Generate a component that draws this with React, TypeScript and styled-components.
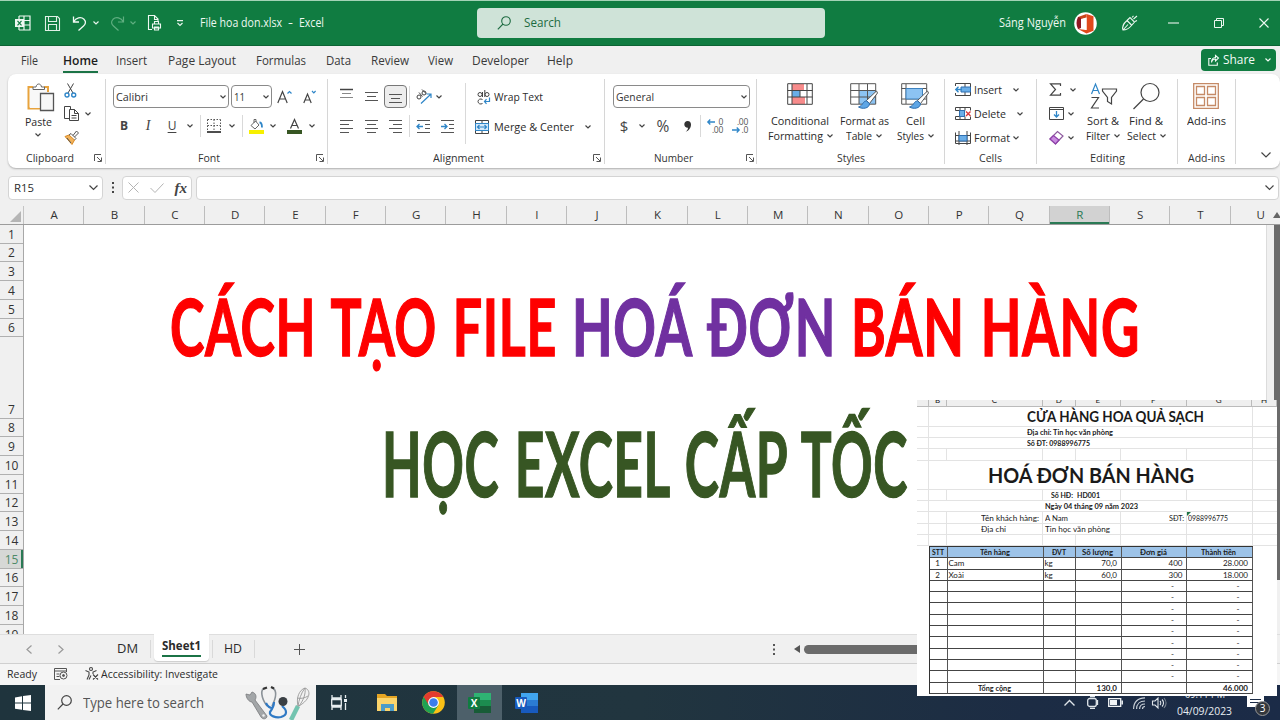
import React, { useLayoutEffect, useRef } from "react";
import styled, { createGlobalStyle } from "styled-components";

const GlobalStyle = createGlobalStyle`
  * { box-sizing: border-box; }
  body { margin: 0; background: #f0f0f0; overflow: hidden; }
  svg { display: block; flex: none; overflow: visible; }
`;

/* ---------- text fitted to a given width ---------- */

const FitBox = styled.span<{ $w: number }>`
  display: block;
  flex: none;
  width: ${(p) => p.$w}px;
  white-space: pre;
  text-align: left;
`;
const FitInner = styled.span`
  display: inline-block;
  transform-origin: 0 50%;
`;

function Fit({ w, children }: { w: number; children: React.ReactNode }) {
  const ref = useRef<HTMLSpanElement>(null);
  useLayoutEffect(() => {
    const el = ref.current;
    if (!el) return;
    el.style.transform = "none";
    const natural = el.getBoundingClientRect().width;
    if (natural > 0) el.style.transform = `scaleX(${w / natural})`;
  }, [w]);
  return (
    <FitBox $w={w}>
      <FitInner ref={ref}>{children}</FitInner>
    </FitBox>
  );
}

/* ---------- shared pieces ---------- */

const Screen = styled.div`
  width: 1280px;
  height: 720px;
  display: flex;
  flex-direction: column;
  position: relative;
  overflow: hidden;
  background: #f0f0f0;
  color: #2b2b2b;
  font: 12px/16px "Open Sans", "Noto Sans", sans-serif;
`;
const Slot = styled.div<{ $w?: number; $start?: boolean; $ml?: number }>`
  display: flex;
  flex: none;
  align-items: center;
  justify-content: ${(p) => (p.$start ? "flex-start" : "center")};
  width: ${(p) => (p.$w ? `${p.$w}px` : "auto")};
  margin-left: ${(p) => p.$ml ?? 0}px;
`;
const Spacer = styled.div`
  flex: 1;
`;

function Icon({ w, h, children, stroke = "#444", sw = 1 }: { w: number; h: number; children: React.ReactNode; stroke?: string; sw?: number }) {
  return (
    <svg width={w} height={h} viewBox={`0 0 ${w} ${h}`} fill="none" stroke={stroke} strokeWidth={sw}>
      {children}
    </svg>
  );
}
const Chevron = ({ c = "#444", s = 6, sw = 1.2 }: { c?: string; s?: number; sw?: number }) => (
  <Icon w={s} h={s / 2 + 1} stroke={c} sw={sw}>
    <path d={`M.5 .5L${s / 2} ${s / 2}L${s - 0.5} .5`} />
  </Icon>
);

/* ---------- title bar ---------- */

const TitleBar = styled.header`
  flex: none;
  height: 46px;
  display: flex;
  align-items: center;
  padding-left: 15px;
  background: #107c41;
  border-top: 1px solid #a3d3b6;
  border-bottom: 1px solid #0c6434;
  color: #eef8f2;
`;
const SearchBox = styled.div`
  width: 348px;
  height: 30px;
  margin-left: 153px;
  padding-left: 20px;
  display: flex;
  align-items: center;
  gap: 13px;
  border-radius: 4px;
  background: #cfe3d8;
  color: #1d6b41;
  font-size: 12.5px;
`;
const UserName = styled.div`
  margin-left: 174px;
  font-size: 12px;
`;

const Title = () => (
  <TitleBar>
    <Icon w={16} h={16} stroke="#eef8f2" sw={1.2}>
      <path d="M4 1h11v14H4M9 1v14M9 5.500h6M9 10h6M4 1v3M4 12v3" />
      <rect x="0" y="4" width="9" height="8" fill="#eef8f2" stroke="none" />
      <path d="M2.500 5.800l4 4.600M6.500 5.800l-4 4.600" stroke="#107c41" />
    </Icon>
    <Slot $ml={14} $w={15}>
      <Icon w={15} h={15} stroke="#dff0e6" sw={1.1}>
        <path d="M.5 .5h12l2 2v12H.5zM3.500 .5v5h8v-5M3.500 14.500v-6h8v6" />
      </Icon>
    </Slot>
    <Slot $ml={12} $w={15}>
      <Icon w={15} h={15} stroke="#f2faf5" sw={1.3}>
        <path d="M1.500 .5v5.500h5.500M1.500 6C4 1.500 9 .5 12 3.300c2.400 2.400 1.500 5-.5 6.700L6.500 14.500" />
      </Icon>
    </Slot>
    <Slot $w={17}><Chevron c="#e6f4ec" /></Slot>
    <Slot $ml={6} $w={15}>
      <Icon w={15} h={15} stroke="#5fae80" sw={1.2}>
        <path d="M13.500 .5v5.500H8M13.500 6C11 1.500 6 .5 3 3.300 .6 5.700 1.500 8.300 3.500 10L8.500 14.500" />
      </Icon>
    </Slot>
    <Slot $w={15}><Chevron c="#5fae80" /></Slot>
    <Slot $ml={8} $w={14}>
      <Icon w={14} h={16} stroke="#eef8f2" sw={1.1}>
        <path d="M4 14.500H.5V.5h6l3.500 3.500v2M6.500 .5v4h3.500M6.500 9V6.500h4V9M4.500 13V9h8v4zM6.500 12h4v3h-4z" />
      </Icon>
    </Slot>
    <Slot $w={14} $ml={11}>
      <Icon w={8} h={7} stroke="#e6f4ec" sw={1.2}><path d="M1 .6h6M1.500 3l2.500 2.500L6.500 3" /></Icon>
    </Slot>
    <Slot $ml={13}><Fit w={82}>File hoa don.xlsx</Fit></Slot>
    <Slot $ml={6}><Fit w={5}>-</Fit></Slot>
    <Slot $ml={6}><Fit w={25}>Excel</Fit></Slot>
    <SearchBox>
      <Icon w={14} h={14} stroke="#1d6b41" sw={1.1}><circle cx="9" cy="5" r="4.300" /><path d="M6 8L.8 13.300" /></Icon>
      <Fit w={37}>Search</Fit>
    </SearchBox>
    <UserName><Fit w={67}>Sáng Nguyễn</Fit></UserName>
    <Slot $ml={8}>
      <svg width="23" height="23" viewBox="0 0 23 23">
        <circle cx="11.500" cy="11.500" r="11.300" fill="#fff" />
        <path d="M12.500 2L4 5v12l3-1.200V7l5.500-1.500z" fill="#c8451b" />
        <path d="M12.500 2l7 2.300v14.400l-7 2.800L4 17l8.500 1z" fill="#e0491c" />
        <path d="M4 5l3 1v10l-3 1c-2-4-2-8 0-12z" fill="#8f1722" />
        <path d="M8.500 7l4-1.500V18l-4-1.500z" fill="#fff" />
      </svg>
    </Slot>
    <Slot $ml={24} $w={17}>
      <Icon w={16} h={16} stroke="#eef8f2" sw={1.1}>
        <path d="M1 15C0 12 1.500 8.500 5 5.500l3-3 4.500 4.500-3 3.500C7 13.500 4.500 15 1 15zM1 15l5-5.500M5 5.500L9.500 10M10 2.500L11.500 .8M11.500 4L15 1M13 6.500l2-1" />
      </Icon>
    </Slot>
    <Slot $ml={30} $w={11}><Icon w={11} h={2} stroke="#fff"><path d="M0 1h11" /></Icon></Slot>
    <Slot $ml={34} $w={11}>
      <Icon w={10} h={10} stroke="#eef8f2"><path d="M.5 2.500h7v7h-7zM2.500 2.500v-2h7v7h-2" /></Icon>
    </Slot>
    <Slot $ml={34} $w={11}><Icon w={10} h={10} stroke="#eef8f2" sw={1.1}><path d="M.5 .5l9 9M9.500 .5l-9 9" /></Icon></Slot>
  </TitleBar>
);

/* ---------- ribbon tabs ---------- */

const TabStrip = styled.nav`
  flex: none;
  height: 28px;
  display: flex;
  align-items: center;
  padding-left: 21px;
  color: #333;
  font-size: 12.5px;
`;
const RibbonTab = styled.div<{ $gap: number; $active?: boolean }>`
  height: 25px;
  padding-top: 5px;
  margin-right: ${(p) => p.$gap}px;
  font-weight: ${(p) => (p.$active ? 600 : 400)};
  color: ${(p) => (p.$active ? "#1c1c1c" : "#3a3a3a")};
  border-bottom: 2px solid ${(p) => (p.$active ? "#1b7346" : "transparent")};
`;
const ShareButton = styled.div`
  width: 75px;
  height: 22px;
  margin-right: 4px;
  padding-left: 7px;
  display: flex;
  align-items: center;
  border-radius: 4px;
  background: #107c41;
  color: #f3fbf6;
`;
const tabs: [string, number, number][] = [
  ["File", 17, 25], ["Home", 35, 18], ["Insert", 31, 21], ["Page Layout", 68, 20], ["Formulas", 50, 20],
  ["Data", 25, 20], ["Review", 38, 19], ["View", 25, 19], ["Developer", 57, 18], ["Help", 26, 0],
];
const RibbonTabs = () => (
  <TabStrip>
    {tabs.map(([name, w, gap]) => (
      <RibbonTab key={name} $gap={gap} $active={name === "Home"}><Fit w={w}>{name}</Fit></RibbonTab>
    ))}
    <Spacer />
    <ShareButton>
      <Icon w={11} h={11} stroke="#f3fbf6" sw={1.1}>
        <path d="M3 3.500H.8v6.700h8.500V7.500M3.500 7.500C4 5 5.500 4 7.500 4V6L10.500 3 7.500 .5v2C5 2.500 3.500 4.500 3.500 7.500z" />
      </Icon>
      <Slot $ml={4}><Fit w={32}>Share</Fit></Slot>
      <Slot $ml={10}><Chevron c="#f3fbf6" /></Slot>
    </ShareButton>
  </TabStrip>
);

/* ---------- ribbon ---------- */

const RibbonPanel = styled.section`
  flex: none;
  height: 94px;
  margin-left: 8px;
  padding-top: 5px;
  display: flex;
  border-radius: 8px;
  background: #fff;
  box-shadow: 0 1px 2px rgba(0, 0, 0, 0.28);
  font-size: 11.5px;
`;
const Group = styled.div<{ $w: number }>`
  flex: none;
  width: ${(p) => p.$w}px;
  height: 85px;
  display: flex;
  flex-direction: column;
  border-right: 1px solid #d6d6d6;
`;
const GroupBody = styled.div`
  flex: none;
  height: 71px;
  display: flex;
`;
const GroupFooter = styled.div`
  flex: none;
  display: flex;
  align-items: center;
  height: 16px;
  font-size: 10.5px;
  color: #333;
`;
const Stack = styled.div<{ $w?: number; $ml?: number; $pt?: number }>`
  flex: none;
  display: flex;
  flex-direction: column;
  width: ${(p) => (p.$w ? `${p.$w}px` : "auto")};
  margin-left: ${(p) => p.$ml ?? 0}px;
  padding-top: ${(p) => p.$pt ?? 0}px;
`;
const Row = styled.div<{ $h: number; $pl?: number }>`
  display: flex;
  flex: none;
  align-items: center;
  height: ${(p) => p.$h}px;
  padding-left: ${(p) => p.$pl ?? 0}px;
`;
const Combo = styled.div<{ $w: number; $ml?: number }>`
  flex: none;
  width: ${(p) => p.$w}px;
  height: 23px;
  margin-left: ${(p) => p.$ml ?? 0}px;
  padding: 0 2px 0 2px;
  display: flex;
  align-items: center;
  justify-content: space-between;
  border: 1px solid #8a8a8a;
  border-radius: 4px;
  background: #fff;
  color: #333;
`;
const Divider = styled.div<{ $h?: number; $ml?: number }>`
  flex: none;
  width: 1px;
  height: ${(p) => p.$h ?? 22}px;
  margin-left: ${(p) => p.$ml ?? 0}px;
  background: #d9d9d9;
`;
const Pressed = styled.div`
  width: 23px;
  height: 23px;
  display: flex;
  align-items: center;
  justify-content: center;
  border: 1px solid #777;
  border-radius: 4px;
  background: #ededed;
`;
const Glyph = styled.span<{ $size: number; $bold?: boolean; $italic?: boolean; $serif?: boolean; $u?: boolean }>`
  font-size: ${(p) => p.$size}px;
  font-weight: ${(p) => (p.$bold ? 700 : 400)};
  font-style: ${(p) => (p.$italic ? "italic" : "normal")};
  font-family: ${(p) => (p.$serif ? '"Liberation Serif", serif' : "inherit")};
  text-decoration: ${(p) => (p.$u ? "underline" : "none")};
  text-underline-offset: 2px;
  line-height: 16px;
  color: #444;
`;
const BigButton = styled.div<{ $w: number; $ml?: number }>`
  flex: none;
  width: ${(p) => p.$w}px;
  margin-left: ${(p) => p.$ml ?? 0}px;
  padding-top: 4px;
  display: flex;
  flex-direction: column;
  align-items: center;
  line-height: 15px;
`;
const BigIcon = styled.div`
  height: 30px;
  display: flex;
  align-items: flex-start;
`;
const TextLine = styled.div`
  display: flex;
  align-items: center;
  gap: 4px;
`;
const Launcher = () => (
  <Icon w={8} h={8} stroke="#555"><path d="M.5 7V.5H7M3 3l4 4M7.500 3.500v4h-4" /></Icon>
);

const Lines = ({ rows, w = 13 }: { rows: [number, number][]; w?: number }) => (
  <Icon w={w} h={13} stroke="#555">
    {rows.map(([a, b], i) => <path key={i} d={`M${a} ${i * 4 + 0.5}H${b}`} />)}
  </Icon>
);

const ClipboardGroup = () => (
  <Group $w={98}>
    <GroupBody>
      <Stack $w={46} $ml={8} $pt={4}>
        <Slot $ml={4} $w={40}>
          <Icon w={27} h={28}>
            <path d="M6 4H1.500v21.500H13M17 4h4v5" stroke="#e8a33d" strokeWidth="2" />
            <path d="M3 5h17v20H3z" fill="#f8f8f8" stroke="none" />
            <path d="M6 6.500V4h3c.5-4 5-4 5.500 0h3v2.500z" fill="#fff" stroke="#666" />
            <path d="M13.500 10.500h13v17h-13z" fill="#f7f7f7" stroke="#555" strokeWidth="1.300" />
          </Icon>
        </Slot>
        <Slot $ml={2} $w={40}><Row $h={22}><Fit w={27}>Paste</Fit></Row></Slot>
        <Slot $w={44}><Chevron /></Slot>
      </Stack>
      <Stack $ml={2} $w={40} $pt={1}>
        <Row $h={20}>
          <Icon w={13} h={15}>
            <path d="M3.500 .5L9 10M9.500 .5L4 10" />
            <circle cx="3" cy="12" r="2" stroke="#2f86c8" strokeWidth="1.400" />
            <circle cx="9.700" cy="12" r="2" stroke="#2f86c8" strokeWidth="1.400" />
          </Icon>
        </Row>
        <Row $h={27}>
          <Icon w={15} h={15}>
            <path d="M5 12.500H.5V.5h6V3" />
            <path d="M5.500 3.500h5l4 4v7h-9z" fill="#fff" />
            <path d="M10.500 3.500v4h4M7.500 9.500h5M7.500 12h5" />
          </Icon>
          <Slot $ml={6}><Chevron /></Slot>
        </Row>
        <Row $h={21}>
          <Icon w={15} h={15}>
            <path d="M1 6.500l4-1.500 5.500 5L8 14.500z" fill="#f2b25a" stroke="#d98a24" />
            <path d="M5 5l2-1.500 5 5L10.500 10M9 5.500L12.500 1l2 2-4 4M3 8l4 5" stroke="#555" />
          </Icon>
        </Row>
      </Stack>
    </GroupBody>
    <GroupFooter>
      <Slot $ml={18}><Fit w={48}>Clipboard</Fit></Slot>
      <Slot $ml={20}><Launcher /></Slot>
    </GroupFooter>
  </Group>
);

const FontGroup = () => (
  <Group $w={222}>
    <GroupBody>
      <Stack $pt={6}>
        <Row $h={23} $pl={7}>
          <Combo $w={116}><Fit w={32}>Calibri</Fit><Chevron /></Combo>
          <Combo $w={41} $ml={2}><Fit w={11}>11</Fit><Chevron /></Combo>
          <Slot $ml={5} $w={15}>
            <Icon w={15} h={14} sw={1.2}><path d="M.8 13L5.500 1.500 10.200 13M2.500 9h6" /><path d="M10.500 3.500l2-2 2 2" stroke="#2f86c8" /></Icon>
          </Slot>
          <Slot $ml={11} $w={13}>
            <Icon w={13} h={14} sw={1.2}><path d="M.8 13L4.500 4 8.200 13M2 10h5" /><path d="M9 1l1.800 1.800L12.600 1" stroke="#2f86c8" /></Icon>
          </Slot>
        </Row>
        <Row $h={36} $pl={11}>
          <Slot $w={14}><Glyph $size={12} $bold>B</Glyph></Slot>
          <Slot $w={12} $ml={11}><Glyph $size={14} $italic $serif>I</Glyph></Slot>
          <Slot $w={12} $ml={12}><Glyph $size={12} $u>U</Glyph></Slot>
          <Slot $w={8} $ml={8}><Chevron /></Slot>
          <Divider $ml={6} />
          <Slot $w={14} $ml={6}>
            <Icon w={14} h={14} stroke="#555"><path d="M.5 .5v12M13.500 .5v12M7 .5v12M.5 .5h13M.5 6.500h13" strokeDasharray="1.500 1.500" /><path d="M0 13h14" stroke="#222" strokeWidth="1.600" /></Icon>
          </Slot>
          <Slot $w={8} $ml={7}><Chevron /></Slot>
          <Divider $ml={6} />
          <Slot $w={15} $ml={6}>
            <Icon w={15} h={15}>
              <path d="M0 13h15" stroke="#f7f000" strokeWidth="4" />
              <path d="M2 6.500L6.500 2l3.500 4-4 4zM5 4V.5h2V3" stroke="#666" />
              <path d="M10.500 3.500c2 0 2.500 2 2.500 5" stroke="#2f86c8" strokeWidth="1.800" />
            </Icon>
          </Slot>
          <Slot $w={8} $ml={5}><Chevron /></Slot>
          <Slot $w={15} $ml={10}>
            <Icon w={15} h={15}>
              <path d="M0 13h15" stroke="#375623" strokeWidth="4" />
              <path d="M3.500 9.500L7.500 .5l4 9M5 6.500h5" strokeWidth="1.200" />
            </Icon>
          </Slot>
          <Slot $w={8} $ml={6}><Chevron /></Slot>
        </Row>
      </Stack>
    </GroupBody>
    <GroupFooter>
      <Slot $ml={92}><Fit w={22}>Font</Fit></Slot>
      <Slot $ml={96}><Launcher /></Slot>
    </GroupFooter>
  </Group>
);

const AlignmentGroup = () => (
  <Group $w={277}>
    <GroupBody>
      <Stack $pt={6} $w={137}>
        <Row $h={23} $pl={12}>
          <Icon w={14} h={17} stroke="#444"><path d="M0 1.500h13" strokeWidth="1.500" /><path d="M2 5.500h9M0 9.500h13" stroke="#888" /></Icon>
          <Slot $ml={11}><Icon w={13} h={9} stroke="#555"><path d="M0 .5h13M2 4.500h9M0 8.500h13" /></Icon></Slot>
          <Slot $ml={6}><Pressed><Icon w={13} h={10} stroke="#555"><path d="M0 2.500h13M2 6.500h9M0 10.500h13" /></Icon></Pressed></Slot>
          <Divider $ml={2} />
          <Slot $ml={6}>
            <Icon w={16} h={15}>
              <circle cx="3" cy="8" r="2" /><path d="M3 3.500l3.500 4" /><circle cx="8" cy="4" r="2" /><path d="M6 .5l4 4" />
              <path d="M5 14.500l9.500-9M10.500 5h4.500v4" stroke="#2f86c8" strokeWidth="1.200" />
            </Icon>
          </Slot>
          <Slot $ml={4}><Chevron /></Slot>
        </Row>
        <Row $h={36} $pl={12}>
          <Lines w={14} rows={[[0, 13], [0, 9], [0, 13], [0, 9]]} />
          <Slot $ml={11}><Lines rows={[[0, 13], [2, 11], [0, 13], [2, 11]]} /></Slot>
          <Slot $ml={11}><Lines rows={[[0, 13], [4, 13], [0, 13], [4, 13]]} /></Slot>
          <Divider $ml={7} />
          <Slot $ml={7}>
            <Icon w={14} h={13} stroke="#555"><path d="M0 .5h13M8 4.500h5M8 8.500h5M0 12.500h13" /><path d="M0 6.500h6M2.500 4L0 6.500 2.500 9" stroke="#2f86c8" strokeWidth="1.300" /></Icon>
          </Slot>
          <Slot $ml={10}>
            <Icon w={14} h={13} stroke="#555"><path d="M0 .5h13M8 4.500h5M8 8.500h5M0 12.500h13" /><path d="M0 6.500h6M3.500 4L6 6.500 3.500 9" stroke="#2f86c8" strokeWidth="1.300" /></Icon>
          </Slot>
        </Row>
      </Stack>
      <Stack $pt={4}><Divider $h={61} /></Stack>
      <Stack $pt={6}>
        <Row $h={24} $pl={11}>
          <Icon w={14} h={15}>
            <circle cx="3" cy="4.500" r="2" /><path d="M5.500 2v5M7.800 0v7" /><circle cx="10" cy="4.500" r="2" />
            <path d="M5.500 9.500c-2-1.300-4.500 0-4.500 2s2.500 3.300 4.500 2" />
            <path d="M12.500 7.500v4H7.500M9.500 9.200l-2 2.300 2 2.300" stroke="#2f86c8" strokeWidth="1.200" />
          </Icon>
          <Slot $ml={3}><Fit w={49}>Wrap Text</Fit></Slot>
        </Row>
        <Row $h={35} $pl={9}>
          <Icon w={14} h={14}>
            <path d="M.5 .5h13v13H.5zM7 .5v3M7 10.500v3" />
            <path d="M.5 3.500h13v7H.5z" fill="#d6eafa" stroke="#2f86c8" />
            <path d="M2.500 7h9M4.500 5l-2 2 2 2M9.500 5l2 2-2 2" stroke="#2f86c8" strokeWidth="1.200" />
          </Icon>
          <Slot $ml={5}><Fit w={80}>Merge &amp; Center</Fit></Slot>
          <Slot $ml={11}><Chevron /></Slot>
        </Row>
      </Stack>
    </GroupBody>
    <GroupFooter>
      <Slot $ml={105}><Fit w={51}>Alignment</Fit></Slot>
      <Slot $ml={109}><Launcher /></Slot>
    </GroupFooter>
  </Group>
);

const Digits = styled.span`
  display: block;
  font-size: 8.5px;
  line-height: 8px;
  letter-spacing: -0.3px;
  text-align: right;
  color: #555;
`;
const DigitIcon = styled.div`
  width: 16px;
  display: flex;
  flex-direction: column;
`;
const DigitRow = styled.div`
  display: flex;
  align-items: center;
  justify-content: space-between;
`;

const NumberGroup = () => (
  <Group $w={152}>
    <GroupBody>
      <Stack $pt={6}>
        <Row $h={23} $pl={8}><Combo $w={137}><Fit w={38}>General</Fit><Chevron /></Combo></Row>
        <Row $h={36} $pl={13}>
          <Slot $w={12}><Glyph $size={15}>$</Glyph></Slot>
          <Slot $ml={8} $w={8}><Chevron /></Slot>
          <Slot $ml={9} $w={16}><Glyph $size={15.5}>%</Glyph></Slot>
          <Slot $ml={12} $w={9}>
            <Icon w={7} h={11} stroke="none"><path d="M3.500 0c2.500 0 3.500 1.700 3.500 3.500 0 3.500-2.200 6.300-5.300 7.200 1.600-1.400 2.300-2.600 2.300-4C1.800 6.800 .3 5.400 .3 3.300 .3 1.300 1.700 0 3.500 0z" fill="#333" /></Icon>
          </Slot>
          <Divider $ml={8} />
          <Slot $ml={6}>
            <DigitIcon>
              <DigitRow><Icon w={8} h={6} stroke="#2f86c8" sw={1.3}><path d="M8 3H.8M3.300 .5L.8 3l2.500 2.500" /></Icon><Digits>0</Digits></DigitRow>
              <Digits>.00</Digits>
            </DigitIcon>
          </Slot>
          <Slot $ml={9}>
            <DigitIcon>
              <Digits>.00</Digits>
              <DigitRow><Icon w={8} h={6} stroke="#2f86c8" sw={1.3}><path d="M0 3h7.200M4.700 .5L7.200 3 4.700 5.500" /></Icon><Digits>.0</Digits></DigitRow>
            </DigitIcon>
          </Slot>
        </Row>
      </Stack>
    </GroupBody>
    <GroupFooter>
      <Slot $ml={49}><Fit w={39}>Number</Fit></Slot>
      <Slot $ml={53}><Launcher /></Slot>
    </GroupFooter>
  </Group>
);

const Brush = ({ x, y }: { x: number; y: number }) => (
  <g transform={`translate(${x} ${y})`}>
    <path d="M18.500 0L8.500 9.500l3 3L19.500 2z" fill="#fff" stroke="#555" />
    <path d="M8.500 10c-4 0-3.500 5-8 6 4 2.500 11 1.500 11-3.500z" fill="#5ea6e6" stroke="#2f6fb0" />
  </g>
);

const StylesGroup = () => (
  <Group $w={188}>
    <GroupBody>
      <BigButton $w={66} $ml={10}>
        <BigIcon>
          <Icon w={26} h={22} stroke="#444">
            <path d="M5 1h12v6H5zM5 14h13v7H5z" fill="#f78b8b" stroke="none" />
            <path d="M5 7h8v7H5z" fill="#6aaee8" stroke="none" />
            <path d="M.7 .7h24.600v20.600H.7zM5 1v20M20 1v20M.5 7.500h25M.5 14h25M13 7v7" />
          </Icon>
        </BigIcon>
        <Fit w={58}>Conditional</Fit>
        <TextLine><Fit w={55}>Formatting</Fit><Chevron /></TextLine>
      </BigButton>
      <BigButton $w={60} $ml={1}>
        <BigIcon>
          <Icon w={28} h={26} stroke="#555">
            <path d="M9 7h17v14H9z" fill="#8cc3f2" stroke="none" />
            <path d="M.7 .7h25v20.500H.7zM9 1v20M17.500 1v20M.5 7.500h25M.5 14h25" />
            <Brush x={8} y={8} />
          </Icon>
        </BigIcon>
        <Fit w={49}>Format as</Fit>
        <TextLine><Fit w={26}>Table</Fit><Chevron /></TextLine>
      </BigButton>
      <BigButton $w={42}>
        <BigIcon>
          <Icon w={28} h={26} stroke="#555">
            <path d="M.7 .7h25v20.500H.7zM5 1v20M.5 5.500h25M.5 16h25" />
            <path d="M5 5.500h16.500V16H5z" fill="#8cc3f2" stroke="#3e83c0" />
            <Brush x={8} y={8} />
          </Icon>
        </BigIcon>
        <Fit w={19}>Cell</Fit>
        <TextLine><Fit w={27}>Styles</Fit><Chevron /></TextLine>
      </BigButton>
    </GroupBody>
    <GroupFooter><Slot $ml={80}><Fit w={28}>Styles</Fit></Slot></GroupFooter>
  </Group>
);

const CellsGroup = () => (
  <Group $w={92}>
    <GroupBody>
      <Stack $ml={10}>
        <Row $h={21}>
          <Icon w={16} h={13}>
            <path d="M5 .5h10.500v12H5M10 .5v12M.5 3V.5H5M.5 10v2.500H5" />
            <path d="M6 4h9.500v5H6z" fill="#6aaee8" stroke="#2f6fb0" />
            <path d="M7 6.500H.8M3.500 3.800L.8 6.500l2.700 2.700" stroke="#2f86c8" strokeWidth="1.400" />
          </Icon>
          <Slot $ml={3}><Fit w={28}>Insert</Fit></Slot><Slot $ml={11}><Chevron /></Slot>
        </Row>
        <Row $h={27}>
          <Icon w={16} h={13}>
            <path d="M.5 .5h15v3M.5 .5v3M.5 9.500v3h15v-3M5 .5v3M10 .5v3M5 9.500v3M10 9.500v3M.5 3.500h9v6h-9" />
            <path d="M4.500 3.500h5v6h-5z" fill="#6aaee8" stroke="#2f6fb0" />
            <path d="M11 4.500l4.500 4.500M15.500 4.500L11 9" stroke="#d8393b" strokeWidth="1.400" />
          </Icon>
          <Slot $ml={3}><Fit w={32}>Delete</Fit></Slot><Slot $ml={11}><Chevron /></Slot>
        </Row>
        <Row $h={22}>
          <Icon w={16} h={14}>
            <path d="M.5 1.500v11h15v-11M4 0v14M12 0v14M.5 4.500h15M.5 10h15" />
            <path d="M4 4.500h8V10H4z" fill="#6aaee8" stroke="#2f6fb0" />
          </Icon>
          <Slot $ml={3}><Fit w={36}>Format</Fit></Slot><Slot $ml={3}><Chevron /></Slot>
        </Row>
      </Stack>
    </GroupBody>
    <GroupFooter><Slot $ml={34}><Fit w={23}>Cells</Fit></Slot></GroupFooter>
  </Group>
);

const EditingGroup = () => (
  <Group $w={141}>
    <GroupBody>
      <Stack $ml={12} $w={30}>
        <Row $h={21}>
          <Icon w={14} h={13} sw={1.2}><path d="M11.500 3V.8H1.500l5 5.700-5 5.700h10V10" /></Icon>
          <Slot $ml={7}><Chevron /></Slot>
        </Row>
        <Row $h={27}>
          <Icon w={15} h={13}><path d="M.5 .5h14v12H.5zM.5 2.500h14" /><path d="M7.500 4v6M5 7.500L7.500 10 10 7.500" stroke="#2f86c8" strokeWidth="1.300" /></Icon>
          <Slot $ml={4}><Chevron /></Slot>
        </Row>
        <Row $h={22}>
          <Icon w={15} h={14}>
            <path d="M1 8l7.500-7.500L14 5 6.500 13z" fill="#fff" stroke="#8d5a9e" strokeWidth="1.200" />
            <path d="M1 8l3.500-3.500L10 9l-3.500 4z" fill="#c98be0" stroke="#8d3fa8" strokeWidth="1.200" />
          </Icon>
          <Slot $ml={4}><Chevron /></Slot>
        </Row>
      </Stack>
      <BigButton $w={34} $ml={7}>
        <BigIcon>
          <Icon w={27} h={26} sw={1.2}>
            <path d="M1.500 11L5.500 1l4 10M3 7.500h5" stroke="#2f86c8" />
            <path d="M1.500 14.500h7L1.500 25H9M12.500 6h14v2l-5 6.500V21l-4-2.500v-4l-5-6.500z" />
          </Icon>
        </BigIcon>
        <Fit w={32}>Sort &amp;</Fit>
        <TextLine><Fit w={24}>Filter</Fit><Chevron /></TextLine>
      </BigButton>
      <BigButton $w={42} $ml={5}>
        <BigIcon>
          <Icon w={27} h={27} sw={1.2}><circle cx="17" cy="9.500" r="9" /><path d="M10.500 16L.5 26" /></Icon>
        </BigIcon>
        <Fit w={34}>Find &amp;</Fit>
        <TextLine><Fit w={29}>Select</Fit><Chevron /></TextLine>
      </BigButton>
    </GroupBody>
    <GroupFooter><Slot $ml={53}><Fit w={35}>Editing</Fit></Slot></GroupFooter>
  </Group>
);

const AddinsGroup = () => (
  <Group $w={58}>
    <GroupBody>
      <BigButton $w={56}>
        <BigIcon>
          <Icon w={26} h={26} stroke="#c58a66" sw={1.3}><path d="M.7 .7h24.600v24.600H.7zM3.500 3.500h8v8h-8zM14.500 3.500h8v8h-8zM3.500 14.500h8v8h-8zM14.500 14.500h8v8h-8z" /></Icon>
        </BigIcon>
        <Fit w={39}>Add-ins</Fit>
      </BigButton>
    </GroupBody>
    <GroupFooter><Slot $ml={10}><Fit w={37}>Add-ins</Fit></Slot></GroupFooter>
  </Group>
);

const CollapseArea = styled.div`
  flex: 1;
  display: flex;
  align-items: flex-end;
  justify-content: flex-end;
  padding: 0 9px 10px 0;
`;

/* ---------- formula bar ---------- */

const FormulaBar = styled.div`
  flex: none;
  height: 38px;
  display: flex;
  align-items: center;
  padding: 1px 1px 0 8px;
`;
const Field = styled.div<{ $w?: number; $ml?: number }>`
  flex: ${(p) => (p.$w ? "none" : "1")};
  width: ${(p) => (p.$w ? `${p.$w}px` : "auto")};
  height: 24px;
  margin-left: ${(p) => p.$ml ?? 0}px;
  padding: 0 4px 0 5px;
  display: flex;
  align-items: center;
  justify-content: space-between;
  border: 1px solid #d4d4d4;
  border-radius: 4px;
  background: #fff;
  font-size: 11.5px;
`;
const Fx = styled.span`
  font: italic bold 15px/20px "Liberation Serif", serif;
  color: #444;
`;

/* ---------- sheet ---------- */

const ColumnHeads = styled.div`
  flex: none;
  height: 19px;
  display: flex;
  border-bottom: 1px solid #9c9c9c;
`;
const Corner = styled.div`
  flex: none;
  width: 24px;
  padding: 5px 0 0 10px;
  border-right: 1px solid #c4c4c4;
`;
const HeadCells = styled.div`
  flex: none;
  width: 1243px;
  display: flex;
  overflow: hidden;
`;
const HeadCell = styled.div<{ $on?: boolean }>`
  flex: none;
  width: 60.330px;
  height: 18px;
  padding-left: 1px;
  text-align: center;
  line-height: 18px;
  font-size: 11.5px;
  border-right: 1px solid #bdbdbd;
  color: ${(p) => (p.$on ? "#2a7a55" : "#333")};
  background: ${(p) => (p.$on ? "#d2d2d2" : "transparent")};
  box-shadow: ${(p) => (p.$on ? "inset 0 -2px 0 #2a7a55" : "none")};
`;
const UpArrow = styled.div`
  margin: 6px 0 0 6px;
`;
const SheetArea = styled.div`
  flex: none;
  height: 409px;
  display: flex;
`;
const RowHeads = styled.div`
  flex: none;
  width: 24px;
  overflow: hidden;
  border-right: 1px solid #a8a8a8;
`;
const RowHead = styled.div<{ $h?: number; $on?: boolean }>`
  height: ${(p) => p.$h ?? 18.74}px;
  display: flex;
  align-items: flex-end;
  justify-content: center;
  border-bottom: 1px solid #b0b0b0;
  font-size: 12px;
  line-height: 16px;
  color: ${(p) => (p.$on ? "#4f8a68" : "#333")};
  background: ${(p) => (p.$on ? "#d6d8d6" : "transparent")};
  box-shadow: ${(p) => (p.$on ? "inset -2px 0 0 #2a7a55" : "none")};
`;
const Canvas = styled.div`
  flex: none;
  width: 1243px;
  background: #fff;
  border-right: 1px solid #dcdcdc;
  font-family: Lato, sans-serif;
  font-weight: 700;
  word-spacing: 4px;
  letter-spacing: 1px;
  -webkit-text-stroke: 1.4px currentColor;
`;
const BannerTop = styled.div`
  display: flex;
  gap: 15px;
  padding: 53px 0 0 146px;
  font-size: 79px;
  line-height: 96px;
`;
const BannerBottom = styled.div`
  padding: 35px 0 0 357.5px;
  font-size: 89px;
  line-height: 108px;
  color: #375623;
`;
const Ink = styled.span<{ $c: string }>`
  color: ${(p) => p.$c};
`;
const ScrollTrack = styled.div`
  flex: none;
  width: 13px;
  display: flex;
  flex-direction: column;
  align-items: flex-start;
  padding-left: 7px;
`;
const ScrollThumb = styled.div`
  width: 8px;
  height: 355px;
  background: #6b6b6b;
`;

const Sheet = () => (
  <>
    <ColumnHeads>
      <Corner><svg width="11" height="11"><path d="M11 0v11H0z" fill="#b5b5b5" /></svg></Corner>
      <HeadCells>
        {"ABCDEFGHIJKLMNOPQRSTU".split("").map((c) => <HeadCell key={c} $on={c === "R"}>{c}</HeadCell>)}
      </HeadCells>
      <UpArrow><svg width="8" height="6"><path d="M4 0l4 6H0z" fill="#666" /></svg></UpArrow>
    </ColumnHeads>
    <SheetArea>
      <RowHeads>
        {Array.from({ length: 19 }, (_, i) => i + 1).map((n) => (
          <RowHead key={n} $h={n === 7 ? 81.3 : undefined} $on={n === 15}>{n}</RowHead>
        ))}
      </RowHeads>
      <Canvas>
        <BannerTop>
          <Ink $c="#fe0000"><Fit w={387}>CÁCH TẠO FILE</Fit></Ink>
          <Ink $c="#7030a0"><Fit w={264}>HOÁ ĐƠN</Fit></Ink>
          <Ink $c="#fe0000"><Fit w={289}>BÁN HÀNG</Fit></Ink>
        </BannerTop>
        <BannerBottom><Fit w={526}>HỌC EXCEL CẤP TỐC</Fit></BannerBottom>
      </Canvas>
      <ScrollTrack><ScrollThumb /></ScrollTrack>
    </SheetArea>
  </>
);

/* ---------- sheet tabs and status ---------- */

const SheetTabs = styled.div`
  flex: none;
  height: 30px;
  display: flex;
  align-items: center;
  border-top: 1px solid #dedede;
  border-bottom: 1px solid #d0d0d0;
  font-size: 12.5px;
`;
const ActiveTab = styled.div`
  width: 55px;
  height: 27px;
  margin: 0 0 3px 3px;
  padding-top: 4px;
  display: flex;
  flex-direction: column;
  align-items: center;
  background: #fff;
  border-radius: 0 0 4px 4px;
  box-shadow: 0 1px 1px #ccc;
  font-weight: 700;
  font-size: 12.5px;
`;
const TabLine = styled.div`
  width: 39px;
  height: 2px;
  margin-top: 1px;
  background: #1b7346;
`;
const HThumb = styled.div`
  width: 300px;
  height: 9px;
  margin-left: 4px;
  border-radius: 5px;
  background: #6b6b6b;
`;
const StatusBar = styled.div`
  flex: none;
  height: 21px;
  display: flex;
  align-items: center;
  padding: 0 0 2px 7px;
  background: #f5f5f5;
  font-size: 10.5px;
`;

/* ---------- taskbar ---------- */

const TaskBar = styled.footer`
  flex: none;
  height: 35px;
  display: flex;
  align-items: center;
  background: linear-gradient(90deg, #1f343d 0%, #21353f 50%, #1c2c44 80%, #1b2b47 100%);
`;
const TaskSearch = styled.div`
  width: 271px;
  height: 35px;
  padding-left: 12px;
  display: flex;
  align-items: center;
  background: #f2f2f2;
  color: #555;
  font-size: 14px;
`;
const ActiveTask = styled.div`
  width: 45px;
  height: 35px;
  display: flex;
  align-items: center;
  justify-content: center;
  background: #4d606a;
`;
const AppLetter = styled.div<{ $c: string }>`
  width: 12px;
  height: 12px;
  background: ${(p) => p.$c};
  color: #fff;
  font: bold 10px/12px "Open Sans", sans-serif;
  text-align: center;
  border-radius: 1px;
`;
const AppTile = styled.div<{ $a: string; $b: string; $d: string }>`
  width: 23px;
  height: 20px;
  padding-top: 4px;
  background: linear-gradient(${(p) => `${p.$a} 0 33%, ${p.$b} 33% 66%, ${p.$d} 66%`}) right / 17px 20px no-repeat;
`;
const Clock = styled.div`
  display: flex;
  flex-direction: column;
  align-items: center;
  margin: -2px 0 0 11px;
  line-height: 17px;
  font-size: 11px;
  color: #e8edf2;
`;
const Bell = styled.div`
  position: relative;
  margin: 2px 0 0 15px;
`;
const Badge = styled.div`
  position: absolute;
  left: 8px;
  top: 5px;
  width: 15px;
  height: 15px;
  border-radius: 50%;
  border: 1px solid #999;
  background: #33373d;
  color: #fff;
  font-size: 10px;
  line-height: 13px;
  text-align: center;
`;

const Tools = () => (
  <svg width="68" height="35" viewBox="0 0 68 35" fill="none">
    <path d="M1 9l4 1 2-3C11 8 12 12 10 15L22 31c0 3-4 4-6 1L7 17C4 17 1 13 1 9z" fill="#a3a6a8" stroke="#77797b" strokeWidth=".8" />
    <circle cx="18.500" cy="30.500" r="1.200" fill="#f2f2f2" />
    <path d="M20 3c-5 1-4 10 2 18M28 3c4 3 3 10-1 18" stroke="#8b9298" strokeWidth="1.600" />
    <path d="M18 4l4-1.500M26 2l3 1.500" stroke="#333" strokeWidth="2.200" />
    <path d="M21 18c2 4 4 5 6 5M29 17c0 4-1 6-4 10-1 4 6 6 11 5 7-2 6-7 1-11" stroke="#2f79c4" strokeWidth="2.200" />
    <circle cx="38" cy="16.500" r="4.500" fill="#3a3f44" />
    <path d="M46 35l7-14" stroke="#73c4b0" strokeWidth="4.500" />
    <path d="M53 21c-2-8 1-16 7-18 6 2 6 11-6 18zM53 21c1-6 3-13 7-18M54 21c4-5 7-12 6-18M52 13c4 1 8 0 11-2" stroke="#999" strokeWidth=".9" />
  </svg>
);

/* ---------- invoice preview ---------- */

const Invoice = styled.div`
  position: absolute;
  left: 917px;
  top: 400px;
  width: 360px;
  height: 296px;
  overflow: hidden;
  background: #fff;
  color: #1a1a1a;
  font: 700 8px/11px Lato, sans-serif;
`;
const InvHead = styled.div`
  height: 6.500px;
  display: grid;
  grid-template-columns: 12px 18px 96px 32.500px 45.500px 65.500px 65.500px 1fr;
  background: #efefef;
  border-bottom: 1px solid #bbb;
  overflow: hidden;
  font-weight: 400;
`;
const InvHeadCell = styled.div`
  height: 11px;
  margin-top: -5px;
  line-height: 10px;
  text-align: center;
  border-right: 1px solid #bbb;
`;
const guide = (x: number) => `linear-gradient(#e3e3e3, #e3e3e3) ${x}px 0 / 1px 100% no-repeat`;
const InvLine = styled.div<{ $h: number; $pl: number; $fs?: number; $light?: boolean; $guides?: number[] }>`
  height: ${(p) => p.$h}px;
  padding: 1.500px 0 0 ${(p) => p.$pl}px;
  display: flex;
  align-items: center;
  border-bottom: 1px solid #e3e3e3;
  font-size: ${(p) => p.$fs ?? 8}px;
  font-weight: ${(p) => (p.$light ? 400 : 700)};
  background: ${(p) => [11, 335, ...(p.$guides ?? [])].map(guide).join(", ")};
`;
const Flagged = styled.div`
  position: relative;
  &::before {
    content: "";
    position: absolute;
    left: -1px;
    top: -1px;
    border: 2px solid transparent;
    border-top-color: #1b7346;
    border-left-color: #1b7346;
  }
`;
const InvTable = styled.div`
  width: 324px;
  margin-left: 11.500px;
  border-left: 1px solid #333;
  border-top: 1px solid #333;
  line-height: 9px;
`;
const InvRow = styled.div<{ $head?: boolean; $bold?: boolean }>`
  display: grid;
  grid-template-columns: 18px 96px 32.500px 45.500px 65.500px 1fr;
  grid-template-rows: 11.300px;
  height: 11.300px;
  background: ${(p) => (p.$head ? "#9dc3e8" : "#fff")};
  font-weight: ${(p) => (p.$head || p.$bold ? 700 : 400)};
`;
const InvCell = styled.div<{ $a: string; $pr?: number }>`
  display: flex;
  align-items: center;
  justify-content: ${(p) => p.$a};
  padding: 1px ${(p) => p.$pr ?? 2}px 0 1px;
  border-right: 1px solid #555;
  border-bottom: 1px solid #444;
`;
const allGuides = [29, 125, 158, 203, 269];
const invRows: [string, string, string, string, string, string][] = [
  ["1", "Cam", "kg", "70,0", "400", "28.000"],
  ["2", "Xoài", "kg", "60,0", "300", "18.000"],
  ...Array.from({ length: 9 }, () => ["", "", "", "", "-", "-"] as [string, string, string, string, string, string]),
];

const InvoicePreview = () => (
  <Invoice>
    <InvHead>{["", "B", "C", "D", "E", "F", "G", "H"].map((c, i) => <InvHeadCell key={i}>{c}</InvHeadCell>)}</InvHead>
    <InvLine $h={20} $pl={110} $fs={14.5}><Fit w={177}>CỬA HÀNG HOA QUẢ SẠCH</Fit></InvLine>
    <InvLine $h={11.5} $pl={110}><Fit w={86}>Địa chỉ: Tin học văn phòng</Fit></InvLine>
    <InvLine $h={11} $pl={110}><Fit w={63}>Số ĐT: 0988996775</Fit></InvLine>
    <InvLine $h={11.5} $pl={0} $guides={allGuides} />
    <InvLine $h={29} $pl={71} $fs={20.5}><Fit w={206}>HOÁ ĐƠN BÁN HÀNG</Fit></InvLine>
    <InvLine $h={11.5} $pl={134} $guides={[29, 125, 203, 269]}><Fit w={22}>Số HĐ:</Fit><Slot $ml={4}><Fit w={23}>HD001</Fit></Slot></InvLine>
    <InvLine $h={11} $pl={128}><Fit w={93}>Ngày 04 tháng 09 năm 2023</Fit></InvLine>
    <InvLine $h={11.5} $pl={64} $light $guides={[29, 125, 203, 269]}>
      <Fit w={58}>Tên khách hàng:</Fit>
      <Slot $ml={6}><Fit w={23}>A Nam</Fit></Slot>
      <Slot $ml={101}><Fit w={15}>SĐT:</Fit></Slot>
      <Slot $ml={4}><Flagged><Fit w={40}>0988996775</Fit></Flagged></Slot>
    </InvLine>
    <InvLine $h={11.5} $pl={64} $light $guides={[29, 125, 203, 269]}>
      <Fit w={25}>Địa chỉ</Fit>
      <Slot $ml={39}><Fit w={65}>Tin học văn phòng</Fit></Slot>
    </InvLine>
    <InvLine $h={11} $pl={0} $guides={allGuides} />
    <InvTable>
      <InvRow $head>
        <InvCell $a="center"><Fit w={12}>STT</Fit></InvCell>
        <InvCell $a="center"><Fit w={30}>Tên hàng</Fit></InvCell>
        <InvCell $a="center"><Fit w={14}>ĐVT</Fit></InvCell>
        <InvCell $a="center"><Fit w={31}>Số lượng</Fit></InvCell>
        <InvCell $a="center"><Fit w={27}>Đơn giá</Fit></InvCell>
        <InvCell $a="center"><Fit w={35}>Thành tiền</Fit></InvCell>
      </InvRow>
      {invRows.map((r, i) => (
        <InvRow key={i}>
          <InvCell $a="center">{r[0]}</InvCell>
          <InvCell $a="flex-start">{r[1]}</InvCell>
          <InvCell $a="flex-start">{r[2]}</InvCell>
          <InvCell $a="flex-end" $pr={3.5}>{r[3]}</InvCell>
          <InvCell $a="flex-end" $pr={i > 1 ? 12 : 3.5}>{r[4]}</InvCell>
          <InvCell $a="flex-end" $pr={i > 1 ? 12 : 3.5}>{r[5]}</InvCell>
        </InvRow>
      ))}
      <InvRow $bold>
        <InvCell $a="center" />
        <InvCell $a="center"><Fit w={33}>Tổng cộng</Fit></InvCell>
        <InvCell $a="center" />
        <InvCell $a="flex-end" $pr={3.5}>130,0</InvCell>
        <InvCell $a="center" />
        <InvCell $a="flex-end" $pr={3.5}>46.000</InvCell>
      </InvRow>
    </InvTable>
  </Invoice>
);

export default function App() {
  return (
    <Screen>
      <GlobalStyle />
      <Title />
      <RibbonTabs />
      <RibbonPanel>
        <ClipboardGroup />
        <FontGroup />
        <AlignmentGroup />
        <NumberGroup />
        <StylesGroup />
        <CellsGroup />
        <EditingGroup />
        <AddinsGroup />
        <CollapseArea><Chevron s={10} /></CollapseArea>
      </RibbonPanel>
      <FormulaBar>
        <Field $w={95}><Fit w={20}>R15</Fit><Chevron s={9} /></Field>
        <Slot $ml={9}><svg width="2" height="11"><path d="M0 0h2v2H0zM0 4.500h2v2H0zM0 9h2v2H0z" fill="#444" /></svg></Slot>
        <Field $w={70} $ml={8}>
          <Icon w={11} h={11} stroke="#b4b4b4"><path d="M.5 .5l10 10M10.500 .5l-10 10" /></Icon>
          <Icon w={14} h={10} stroke="#b4b4b4"><path d="M.5 5l4.500 4.500L13.500 .5" /></Icon>
          <Fx>fx</Fx>
        </Field>
        <Field $ml={4}><span /><Chevron s={9} /></Field>
      </FormulaBar>
      <Sheet />
      <SheetTabs>
        <Slot $ml={26}><Icon w={6} h={9} stroke="#999" sw={1.2}><path d="M5.500 .5l-4.500 4 4.500 4" /></Icon></Slot>
        <Slot $ml={26}><Icon w={6} h={9} stroke="#999" sw={1.2}><path d="M.5 .5L5 4.500 .5 8.500" /></Icon></Slot>
        <Slot $ml={53}><Fit w={21}>DM</Fit></Slot>
        <Divider $h={18} $ml={12} />
        <ActiveTab><Fit w={39}>Sheet1</Fit><Slot $w={55}><TabLine /></Slot></ActiveTab>
        <Divider $h={18} $ml={3} />
        <Slot $ml={11}><Fit w={18}>HD</Fit></Slot>
        <Divider $h={18} $ml={12} />
        <Slot $ml={39}><Icon w={11} h={11} stroke="#555"><path d="M5.500 0v11M0 5.500h11" /></Icon></Slot>
        <Slot $ml={468}><svg width="2" height="11"><path d="M0 0h2v2H0zM0 4.500h2v2H0zM0 9h2v2H0z" fill="#555" /></svg></Slot>
        <Slot $ml={19}><svg width="6" height="8"><path d="M6 0v8L0 4z" fill="#555" /></svg></Slot>
        <HThumb />
      </SheetTabs>
      <StatusBar>
        <Fit w={30}>Ready</Fit>
        <Slot $ml={17}>
          <Icon w={14} h={12} stroke="#555"><path d="M6 11.500H.5V.5h12V4M.5 3h12M2.500 6h3M2.500 8.500h3" /><circle cx="9.500" cy="7.500" r="3.500" /><circle cx="9.500" cy="7.500" r="1" fill="#555" /></Icon>
        </Slot>
        <Slot $ml={17}>
          <Icon w={14} h={13} stroke="#444" sw={1.1}><circle cx="6" cy="2" r="1.500" /><path d="M.5 3.500L4 5v3l-2 4.500M11.500 3.500L8 5v2M6 8.500L4 12.500M8 7.500l5 5M13 7.500l-5 5" /></Icon>
        </Slot>
        <Slot $ml={2}><Fit w={117}>Accessibility: Investigate</Fit></Slot>
      </StatusBar>
      <TaskBar>
        <Slot $w={45}>
          <svg width="16" height="16"><path d="M0 2.500L7 1.300V7.500H0zM8 1.100L16 0v7.500H8zM0 8.500h7v6.200L0 13.700zM8 8.500h8V16l-8-1.100z" fill="#fff" /></svg>
        </Slot>
        <TaskSearch>
          <Icon w={15} h={15} stroke="#444" sw={1.2}><circle cx="9.500" cy="5.500" r="4.800" /><path d="M6 9L.8 14.300" /></Icon>
          <Slot $ml={11}><Fit w={121}>Type here to search</Fit></Slot>
          <Slot $ml={41}><Tools /></Slot>
        </TaskSearch>
        <Slot $ml={15}>
          <Icon w={16} h={15} stroke="#e8eef0" sw={1.3}><path d="M1 0v3h9V0M1 15v-3h9v3M.7 4.500h9.600v6H.7zM14.500 0v3M14.500 8v7" /><path d="M13 4h3v3h-3z" fill="#e8eef0" stroke="none" /></Icon>
        </Slot>
        <Slot $ml={30}>
          <svg width="20" height="17"><path d="M0 0h8l2 2h10v15H0z" fill="#e6a523" /><path d="M0 4h20v13H0z" fill="#fbd46b" /><path d="M4 17v-7h13v7h-4v-3H8v3z" fill="#4c9cc9" /></svg>
        </Slot>
        <Slot $ml={25}>
          <svg width="23" height="23" viewBox="0 0 23 23">
            <circle cx="11.500" cy="11.500" r="11.300" fill="#fbc116" />
            <path d="M11.500 11.500L1.700 5.800A11.300 11.300 0 0 0 11 22.800L16.500 14z" fill="#1fa253" />
            <path d="M11.500 11.500L6.800 14 1.700 5.800A11.300 11.300 0 0 1 21.300 6H11.500z" fill="#e33b2e" />
            <circle cx="11.500" cy="11.500" r="5.400" fill="#fff" /><circle cx="11.500" cy="11.500" r="4.300" fill="#3b7ded" />
          </svg>
        </Slot>
        <Slot $ml={12}>
          <ActiveTask><AppTile $a="#2fb373" $b="#1c8c4f" $d="#185c37"><AppLetter $c="#107c41">X</AppLetter></AppTile></ActiveTask>
        </Slot>
        <Slot $ml={13}><AppTile $a="#41a5ee" $b="#2b7cd3" $d="#185abd"><AppLetter $c="#185abd">W</AppLetter></AppTile></Slot>
        <Slot $ml={526}><Icon w={11} h={6} stroke="#dfe5ea" sw={1.4}><path d="M.5 5.500l5-5 5 5" /></Icon></Slot>
        <Slot $ml={12}><Icon w={11} h={13} stroke="#dfe5ea" sw={1.3}><rect x=".7" y="2.500" width="8.600" height="8" rx="2" /><path d="M10.500 4v5M3 .6h5M3 12.400h5" /></Icon></Slot>
        <Slot $ml={10}><Icon w={15} h={9} stroke="#f2f5f7" sw={1.3}><path d="M.7 .7h12v7.600h-12zM14.300 2.500v4" /><path d="M2 2h7v5H2z" fill="#f2f5f7" stroke="none" /></Icon></Slot>
        <Slot $ml={10}><Icon w={12} h={12} stroke="#c9d1d8" sw={1.2}><path d="M.6 12C.6 5 5 .8 12 .8M3.600 12c0-5 3.400-8 8.400-8M6.600 12c0-3 2-5 5.400-5M9.500 12c0-1.500 1-2.500 2.500-2.500" /></Icon></Slot>
        <Slot $ml={7}><Icon w={14} h={12} stroke="#dfe5ea" sw={1.1}><path d="M.5 4v4h2.500L6 11V1L3 4zM8 4c1 1 1 3 0 4M10 2.500c2 2 2 5 0 7" /><path d="M12 1c2.500 3 2.500 7 0 10" stroke="#75808d" /></Icon></Slot>
        <Clock><Fit w={40}>09:11 PM</Fit><Fit w={55}>04/09/2023</Fit></Clock>
        <Bell>
          <svg width="18" height="15"><path d="M0 0h17v11h-4v3l-3-3H0z" fill="#fff" /><path d="M3 3.500h11M3 6.500h11" stroke="#1b2b47" /></svg>
          <Badge>3</Badge>
        </Bell>
      </TaskBar>
      <InvoicePreview />
    </Screen>
  );
}
